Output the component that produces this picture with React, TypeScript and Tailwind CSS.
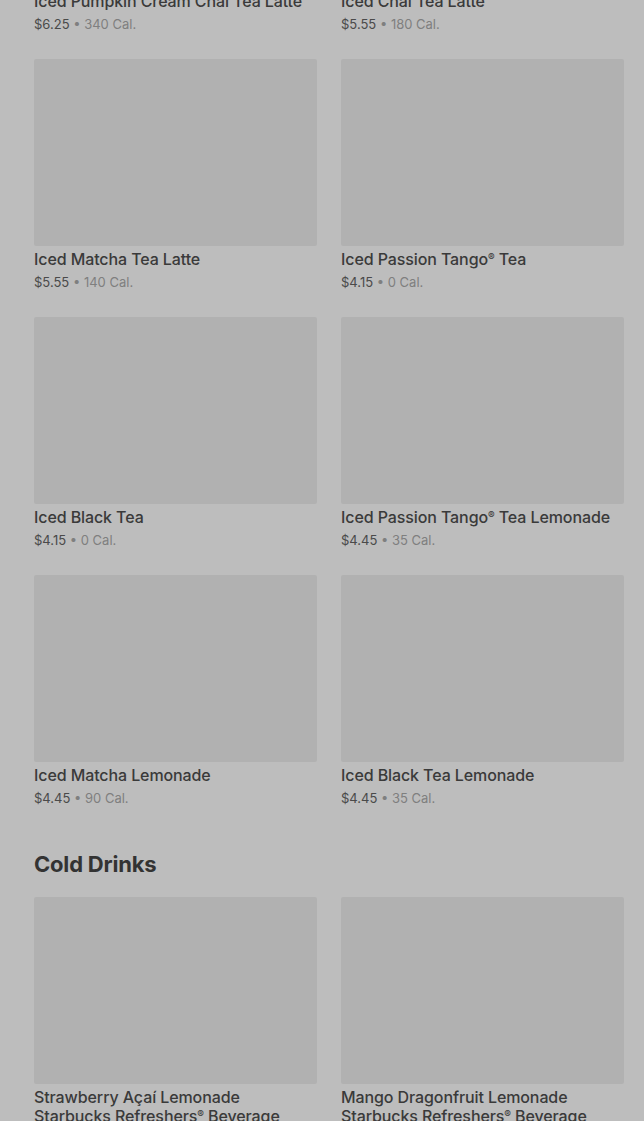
import React from "react";

type Item = { name: string; price: string; cal: string };

const teas: Item[] = [
  { name: "Iced Pumpkin Cream Chai Tea Latte", price: "$6.25", cal: "340 Cal." },
  { name: "Iced Chai Tea Latte", price: "$5.55", cal: "180 Cal." },
  { name: "Iced Matcha Tea Latte", price: "$5.55", cal: "140 Cal." },
  { name: "Iced Passion Tango® Tea", price: "$4.15", cal: "0 Cal." },
  { name: "Iced Black Tea", price: "$4.15", cal: "0 Cal." },
  { name: "Iced Passion Tango® Tea Lemonade", price: "$4.45", cal: "35 Cal." },
  { name: "Iced Matcha Lemonade", price: "$4.45", cal: "90 Cal." },
  { name: "Iced Black Tea Lemonade", price: "$4.45", cal: "35 Cal." },
];

const cold: Item[] = [
  { name: "Strawberry Açaí Lemonade Starbucks Refreshers® Beverage", price: "$5.25", cal: "140 Cal." },
  { name: "Mango Dragonfruit Lemonade Starbucks Refreshers® Beverage", price: "$5.25", cal: "140 Cal." },
];

function Name({ text }: { text: string }) {
  const parts = text.split("®");
  return (
    <>
      {parts.map((p, i) => (
        <React.Fragment key={i}>
          {p}
          {i < parts.length - 1 && (
            <span className="relative top-[-4px] text-[10px] leading-[0]">®</span>
          )}
        </React.Fragment>
      ))}
    </>
  );
}

function Card({ item }: { item: Item }) {
  return (
    <div className="flex flex-col">
      <div className="h-[187px] rounded-[2px] bg-[#b1b1b1]" />
      <div className="mt-[4px] text-[16px] leading-[19px] font-medium tracking-[-0.1px] text-[#3a3a3a]">
        <Name text={item.name} />
      </div>
      <div className="mt-[3px] text-[13px] leading-[20px] text-[#4a4a4a]">
        {item.price}
        <span className="text-[#7f7f7f]"> • {item.cal}</span>
      </div>
    </div>
  );
}

export default function App() {
  return (
    <div
      className="min-h-[1121px] w-full overflow-hidden bg-[#bdbdbd] pl-[34px] pr-[20px]"
      style={{ fontFamily: "Inter, 'Noto Sans', sans-serif" }}
    >
      <div className="mt-[-199px] grid grid-cols-2 gap-x-[24px] gap-y-[25px]">
        {teas.map((t) => (
          <Card key={t.name} item={t} />
        ))}
      </div>
      <h2 className="mt-[40px] text-[22px] leading-[32px] font-bold tracking-[-0.2px] text-[#333333]">
        Cold Drinks
      </h2>
      <div className="mt-[17px] grid grid-cols-2 gap-x-[24px] gap-y-[25px]">
        {cold.map((t) => (
          <Card key={t.name} item={t} />
        ))}
      </div>
    </div>
  );
}
